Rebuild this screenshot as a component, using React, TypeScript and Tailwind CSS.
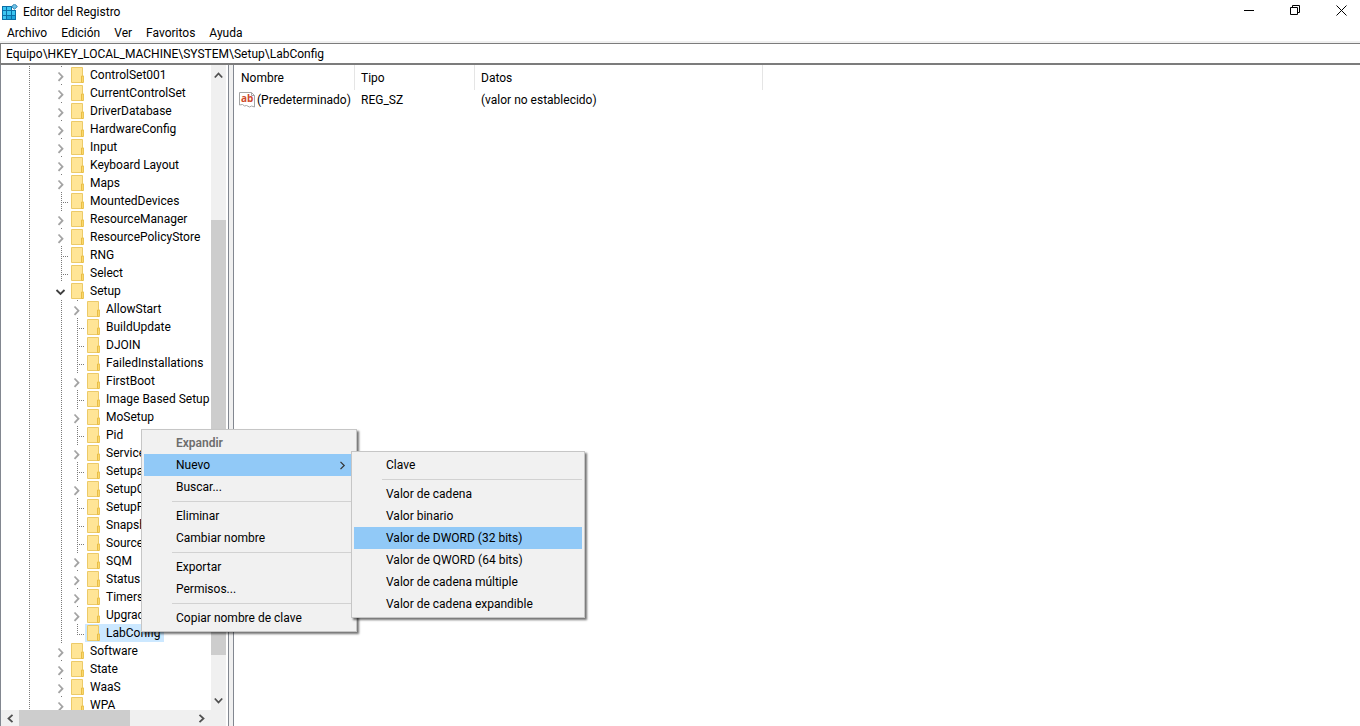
import { useState } from "react";
import clsx from "clsx";

type Guide = "none" | "line" | "tee" | "last" | "closed" | "open";

interface TreeKey {
  name: string;
  depth: 0 | 1;
  guide: Guide;
}

const treeKeys: TreeKey[] = [
  { name: "ControlSet001", depth: 0, guide: "closed" },
  { name: "CurrentControlSet", depth: 0, guide: "closed" },
  { name: "DriverDatabase", depth: 0, guide: "closed" },
  { name: "HardwareConfig", depth: 0, guide: "closed" },
  { name: "Input", depth: 0, guide: "closed" },
  { name: "Keyboard Layout", depth: 0, guide: "closed" },
  { name: "Maps", depth: 0, guide: "closed" },
  { name: "MountedDevices", depth: 0, guide: "tee" },
  { name: "ResourceManager", depth: 0, guide: "closed" },
  { name: "ResourcePolicyStore", depth: 0, guide: "closed" },
  { name: "RNG", depth: 0, guide: "tee" },
  { name: "Select", depth: 0, guide: "tee" },
  { name: "Setup", depth: 0, guide: "open" },
  { name: "AllowStart", depth: 1, guide: "closed" },
  { name: "BuildUpdate", depth: 1, guide: "tee" },
  { name: "DJOIN", depth: 1, guide: "tee" },
  { name: "FailedInstallations", depth: 1, guide: "tee" },
  { name: "FirstBoot", depth: 1, guide: "closed" },
  { name: "Image Based Setup", depth: 1, guide: "tee" },
  { name: "MoSetup", depth: 1, guide: "closed" },
  { name: "Pid", depth: 1, guide: "tee" },
  { name: "Service", depth: 1, guide: "closed" },
  { name: "Setupa", depth: 1, guide: "tee" },
  { name: "SetupC", depth: 1, guide: "closed" },
  { name: "SetupP", depth: 1, guide: "tee" },
  { name: "Snapsh", depth: 1, guide: "tee" },
  { name: "Source", depth: 1, guide: "tee" },
  { name: "SQM", depth: 1, guide: "closed" },
  { name: "Status", depth: 1, guide: "closed" },
  { name: "Timers", depth: 1, guide: "closed" },
  { name: "Upgrad", depth: 1, guide: "closed" },
  { name: "LabConfig", depth: 1, guide: "last" },
  { name: "Software", depth: 0, guide: "closed" },
  { name: "State", depth: 0, guide: "closed" },
  { name: "WaaS", depth: 0, guide: "closed" },
  { name: "WPA", depth: 0, guide: "closed" },
];

const menuBar = ["Archivo", "Edición", "Ver", "Favoritos", "Ayuda"];

const RegistryIcon = () => (
  <svg width="16" height="16" viewBox="0 0 16 16" className="shrink-0" aria-hidden="true">
    <path d="M0 2h10v4h4v10H0z" fill="#0a6fa8" />
    <path d="M1 3h3v3H1zM5 3h4v3H5zM1 7h3v4H1zM5 7h4v4H5zM10 7h3v4h-3zM1 12h3v3H1z" fill="#3cc5f1" />
    <path d="M5 12h4v3H5zM10 12h3v3h-3z" fill="#1fa5dc" />
    <path d="M12.500 0l2.800 2.500-2.800 2.800-2.800-2.800z" fill="#6fc3e6" stroke="#2b7fae" strokeWidth="1" />
  </svg>
);

const FolderIcon = () => (
  <svg width="16" height="18" viewBox="0 0 16 18" className="shrink-0" aria-hidden="true">
    <path d="M2.500 1.500h11v8h.5v7h-11.500z" fill="#ffe596" stroke="#ecca68" />
    <path d="M12.500 10h1.800v6.500h-1.800z" fill="#ffdf76" stroke="#e8bd45" />
  </svg>
);

const StringIcon = () => (
  <svg width="16" height="16" viewBox="0 0 16 16" className="shrink-0" aria-hidden="true">
    <path d="M.5.5h12l3 3v11.500l-3-1-2 1-3-1.500-2 .5-2-1.500-3 .5z" fill="#fff" stroke="#a5a5a5" />
    <path d="M12.500.5v3h3" fill="none" stroke="#a5a5a5" />
    <text x="2" y="10" fontSize="10" fontWeight="700" fill="#cf4a2c" fontFamily="Open Sans, sans-serif">
      ab
    </text>
  </svg>
);

const TreeGuide = ({ type }: { type: Guide }) => (
  <svg width="16" height="18" viewBox="0 0 16 18" className="shrink-0" aria-hidden="true">
    <g stroke="#7a7a7a" strokeDasharray="1 1">
      {(type === "line" || type === "tee") && <path d="M8.500 0v18" />}
      {type === "last" && <path d="M8.500 0v11" />}
      {(type === "tee" || type === "last") && <path d="M10 10.500h5" />}
      {type === "closed" && <path d="M8.500 0v2" />}
    </g>
    {type === "closed" && <path d="M5.500 6.500l4 4.200-4 4.200" fill="none" stroke="#a3a3a3" strokeWidth="1.800" />}
    {type === "open" && <path d="M3.500 8l4 4 4-4" fill="none" stroke="#404040" strokeWidth="1.800" />}
  </svg>
);

const Arrow = ({ d }: { d: string }) => (
  <svg width="9" height="9" viewBox="0 0 9 9" aria-hidden="true">
    <path d={d} fill="none" stroke="#505050" strokeWidth="1.800" />
  </svg>
);

const MenuItem = ({
  label,
  active,
  disabled,
  submenu,
}: {
  label: string;
  active?: boolean;
  disabled?: boolean;
  submenu?: boolean;
}) => (
  <button
    type="button"
    role="menuitem"
    disabled={disabled}
    className={clsx(
      "flex h-[22px] w-full items-center justify-between pr-2 pl-8 text-left whitespace-nowrap",
      active && "bg-[#91c9f7]",
      disabled && "font-semibold text-[#6d6d6d]"
    )}
  >
    {label}
    {submenu && (
      <svg width="7" height="9" viewBox="0 0 7 9" aria-hidden="true">
        <path d="M1.500.8l3.700 3.700-3.700 3.700" fill="none" stroke="#333" strokeWidth="1.200" />
      </svg>
    )}
  </button>
);

const MenuSeparator = () => (
  <div role="separator" className="flex h-[7px] items-center pl-7">
    <span className="h-px w-full bg-[#d2d2d2]" />
  </div>
);

const menuClass = "absolute border border-[#c6c6c6] bg-[#f1f1f1] p-[2px] shadow-[2px_2px_2px_rgba(0,0,0,0.55)]";

const ContextMenu = () => (
  <div role="menu" aria-label="Clave" className={clsx(menuClass, "top-[429px] left-[141px] w-[216px]")}>
    <MenuItem label="Expandir" disabled />
    <MenuItem label="Nuevo" active submenu />
    <MenuItem label="Buscar..." />
    <MenuSeparator />
    <MenuItem label="Eliminar" />
    <MenuItem label="Cambiar nombre" />
    <MenuSeparator />
    <MenuItem label="Exportar" />
    <MenuItem label="Permisos..." />
    <MenuSeparator />
    <MenuItem label="Copiar nombre de clave" />
    <div role="menu" aria-label="Nuevo" className={clsx(menuClass, "top-[21px] left-[209px] w-[234px]")}>
      <MenuItem label="Clave" />
      <MenuSeparator />
      <MenuItem label="Valor de cadena" />
      <MenuItem label="Valor binario" />
      <MenuItem label="Valor de DWORD (32 bits)" active />
      <MenuItem label="Valor de QWORD (64 bits)" />
      <MenuItem label="Valor de cadena múltiple" />
      <MenuItem label="Valor de cadena expandible" />
    </div>
  </div>
);

const captionButton = "flex w-[46px] items-start justify-center pt-[5px] pl-2";

const TitleBar = () => (
  <header className="flex h-6 items-center justify-between pl-[2px]">
    <div className="flex items-center gap-[5px]">
      <RegistryIcon />
      <h1>Editor del Registro</h1>
    </div>
    <div className="flex h-full">
      <button type="button" aria-label="Minimizar" className={captionButton}>
        <svg width="11" height="11" viewBox="0 0 11 11" stroke="#000">
          <path d="M0 5.500h10" />
        </svg>
      </button>
      <button type="button" aria-label="Restaurar" className={captionButton}>
        <svg width="11" height="11" viewBox="0 0 11 11" fill="none" stroke="#000">
          <path d="M.5 2.500h7v7h-7zM2.500 2.500v-2h7v7h-2" />
        </svg>
      </button>
      <button type="button" aria-label="Cerrar" className={captionButton}>
        <svg width="11" height="11" viewBox="0 0 11 11" stroke="#000">
          <path d="M.5.5l10 10M10.500.5l-10 10" />
        </svg>
      </button>
    </div>
  </header>
);

const KeyTree = () => {
  const [selected, setSelected] = useState("LabConfig");

  return (
    <nav aria-label="Claves" className="flex w-[229px] shrink-0 flex-col border-r border-l border-[#828790] pr-[2px]">
      <div className="flex min-h-0 flex-1">
        <ul className="min-w-0 flex-1 overflow-hidden pt-px">
          {treeKeys.map((key) => (
            <li key={key.name} className="flex h-[18px] pl-5">
              <TreeGuide type="line" />
              <TreeGuide type="none" />
              {key.depth === 1 && <TreeGuide type="line" />}
              <TreeGuide type={key.guide} />
              <button
                type="button"
                onClick={() => setSelected(key.name)}
                className={clsx(
                  "flex items-center gap-[5px] pr-1 whitespace-nowrap",
                  selected === key.name && "bg-[#cce8ff]"
                )}
              >
                <FolderIcon />
                <span>{key.name}</span>
              </button>
            </li>
          ))}
        </ul>
        <div className="flex w-[15px] shrink-0 flex-col items-center bg-[#f0f0f0]">
          <div className="flex h-5 items-center">
            <Arrow d="M.8 6.500l3.700-4 3.700 4" />
          </div>
          <div className="flex w-full flex-1 flex-col">
            <div className="flex-[135]" />
            <div className="flex-[435] bg-[#cdcdcd]" />
            <div className="flex-[35]" />
          </div>
          <div className="flex h-5 items-center">
            <Arrow d="M.8 2.500l3.700 4 3.700-4" />
          </div>
        </div>
      </div>
      <div className="flex h-4 items-center bg-[#f0f0f0] pr-4">
        <div className="flex w-[18px] justify-center">
          <Arrow d="M6.500.8l-4 3.700 4 3.700" />
        </div>
        <div className="flex h-full flex-1">
          <div className="w-[111px] bg-[#cdcdcd]" />
        </div>
        <div className="flex w-[18px] justify-center">
          <Arrow d="M2.500.8l4 3.700-4 3.700" />
        </div>
      </div>
    </nav>
  );
};

const ValueList = () => (
  <main className="min-w-0 flex-1 border-l border-[#828790]">
    <table className="w-full table-fixed border-separate border-spacing-0 text-left">
      <colgroup>
        <col className="w-[121px]" />
        <col className="w-[120px]" />
        <col className="w-[288px]" />
        <col />
      </colgroup>
      <thead>
        <tr className="h-[25px]">
          <th className="border-r border-[#e5e5e5] pl-[7px] font-normal">Nombre</th>
          <th className="border-r border-[#e5e5e5] pl-[6px] font-normal">Tipo</th>
          <th className="border-r border-[#e5e5e5] pl-[6px] font-normal">Datos</th>
          <td />
        </tr>
      </thead>
      <tbody>
        <tr className="h-5 whitespace-nowrap">
          <td className="pl-[5px]">
            <span className="flex items-center gap-[2px]">
              <StringIcon />
              (Predeterminado)
            </span>
          </td>
          <td className="pl-[6px]">REG_SZ</td>
          <td className="pl-[6px]">(valor no establecido)</td>
          <td />
        </tr>
      </tbody>
    </table>
  </main>
);

const App = () => {
  const [path, setPath] = useState("Equipo\\HKEY_LOCAL_MACHINE\\SYSTEM\\Setup\\LabConfig");

  return (
    <div className="relative flex h-screen flex-col overflow-hidden bg-white font-[Roboto,'Noto_Sans',sans-serif] text-[12px] leading-4 text-black">
      <TitleBar />
      <nav aria-label="Menú" className="flex h-[19px] items-center border-b-2 border-[#f0f0f0]">
        {menuBar.map((item) => (
          <button key={item} type="button" className="px-[7px]">
            {item}
          </button>
        ))}
      </nav>
      <input
        aria-label="Dirección"
        value={path}
        onChange={(e) => setPath(e.target.value)}
        className="h-[22px] w-full shrink-0 border-t border-b-2 border-l border-[#7c7c7c] pl-[5px] outline-none"
      />
      <div className="flex min-h-0 flex-1 bg-white">
        <KeyTree />
        <div className="w-1 shrink-0 bg-[#f0f0f0]" />
        <ValueList />
      </div>
      <ContextMenu />
    </div>
  );
};

export default App;
